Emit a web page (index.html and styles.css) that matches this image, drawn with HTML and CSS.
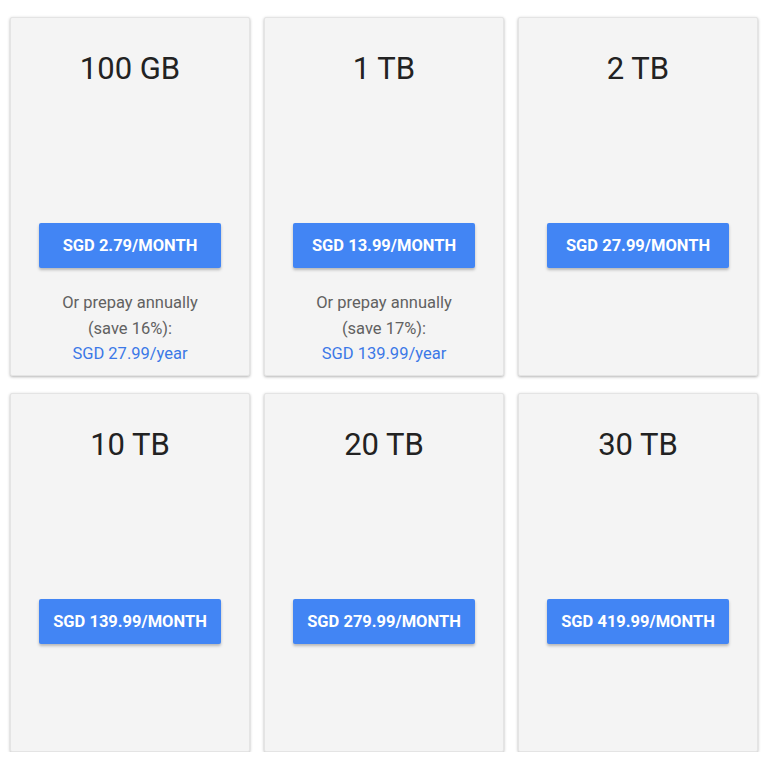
FILE: index.html
```html
<!DOCTYPE html>
<html>
    <head>
        <link rel="stylesheet" href="styles.css">
    </head>
    <body>
        <div class="plans">
            <div class="card">
                <h2 class="size">100 GB</h2>
                <button class="price">SGD 2.79/MONTH</button>
                <p class="annual">Or prepay annually<br>(save 16%):<br><a href="#">SGD 27.99/year</a></p>
            </div>
            <div class="card">
                <h2 class="size">1 TB</h2>
                <button class="price">SGD 13.99/MONTH</button>
                <p class="annual">Or prepay annually<br>(save 17%):<br><a href="#">SGD 139.99/year</a></p>
            </div>
            <div class="card">
                <h2 class="size">2 TB</h2>
                <button class="price">SGD 27.99/MONTH</button>
            </div>
            <div class="card">
                <h2 class="size">10 TB</h2>
                <button class="price">SGD 139.99/MONTH</button>
            </div>
            <div class="card">
                <h2 class="size">20 TB</h2>
                <button class="price">SGD 279.99/MONTH</button>
            </div>
            <div class="card">
                <h2 class="size">30 TB</h2>
                <button class="price">SGD 419.99/MONTH</button>
            </div>
        </div>
    </body>
</html>
```

FILE: styles.css
```css
* {
    margin: 0;
    padding: 0;
    box-sizing: border-box;
}

body {
    background-color: #ffffff;
    font-family: Roboto, "Liberation Sans", sans-serif;
}

.plans {
    display: grid;
    grid-template-columns: repeat(3, 240px);
    grid-auto-rows: 359px;
    column-gap: 14px;
    row-gap: 17px;
    padding: 17px 0 0 10px;
}

.card {
    background-color: #f4f4f4;
    border: 1px solid #e4e4e4;
    border-radius: 2px;
    box-shadow: 0 1px 3px rgba(0, 0, 0, 0.3);
    display: flex;
    flex-direction: column;
    align-items: center;
    padding-top: 32px;
}

.size {
    font-size: 31px;
    font-weight: 400;
    line-height: 38px;
    color: #222222;
}

.price {
    margin-top: 135px;
    width: 182px;
    height: 45px;
    border: none;
    border-radius: 2px;
    background-color: #4285f4;
    color: #ffffff;
    font-family: Roboto, "Liberation Sans", sans-serif;
    font-size: 16.5px;
    font-weight: 700;
    box-shadow: 0 2px 3px rgba(0, 0, 0, 0.25);
}

.annual {
    margin-top: 22px;
    text-align: center;
    font-size: 16.5px;
    line-height: 25.5px;
    color: #616161;
}

.annual a {
    color: #3b78e7;
    text-decoration: none;
}
```
